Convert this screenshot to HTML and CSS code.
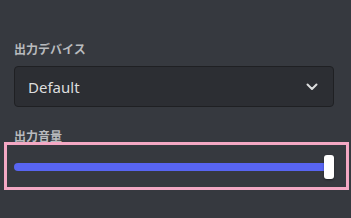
FILE: index.html
```html
<!DOCTYPE html>
<html>
<head>
    <title>Voice Settings</title>
    <link rel="stylesheet" href="styles.css">
</head>
<body>
    <div class="panel">
        <div class="field-label">出力デバイス</div>
        <div class="select-box">
            <span class="select-value">Default</span>
            <svg class="chevron" width="12" height="8" viewBox="0 0 12 8">
                <polyline points="1.5,1.5 6,6 10.5,1.5" fill="none" stroke="#dcddde" stroke-width="2" stroke-linecap="round" stroke-linejoin="round"/>
            </svg>
        </div>

        <div class="field-label second">出力音量</div>
        <div class="slider-frame">
            <div class="slider">
                <div class="track" style="width: 100%"></div>
                <div class="thumb"></div>
            </div>
        </div>
    </div>
</body>
</html>
```

FILE: styles.css
```css
html, body { margin: 0; padding: 0; }
body { background: #36393f; width: 351px; height: 218px; overflow: hidden; font-family: "Noto Sans", "Noto Sans CJK JP", sans-serif; }
.panel { padding: 42px 17px 0 14px; }
.field-label { font-family: "Noto Sans CJK JP", sans-serif; font-size: 12px; line-height: 14px; font-weight: 700; color: #b9bbbe; }
.field-label.second { margin-top: 22px; }
.select-box { margin-top: 10px; height: 39px; border: 1px solid #1f2023; border-radius: 4px; background: #2c2e33; display: flex; align-items: center; justify-content: space-between; padding: 0 15px 0 13px; }
.select-value { font-size: 15px; color: #dcddde; }
.chevron { display: block; margin-top: 1px; }
.slider-frame { margin: -1px -15px 0 -10px; height: 42px; border: 3px solid #f4a8c4; padding: 0 12px 0 7px; display: flex; align-items: center; }
.slider { position: relative; flex: 1; height: 8px; margin-top: 2px; }
.track { height: 8px; border-radius: 4px; background: #5865f2; }
.thumb { position: absolute; right: 0; top: -8px; width: 10px; height: 24px; border-radius: 3px; background: #ffffff; box-shadow: 0 1px 2px rgba(0,0,0,0.4); }
```
